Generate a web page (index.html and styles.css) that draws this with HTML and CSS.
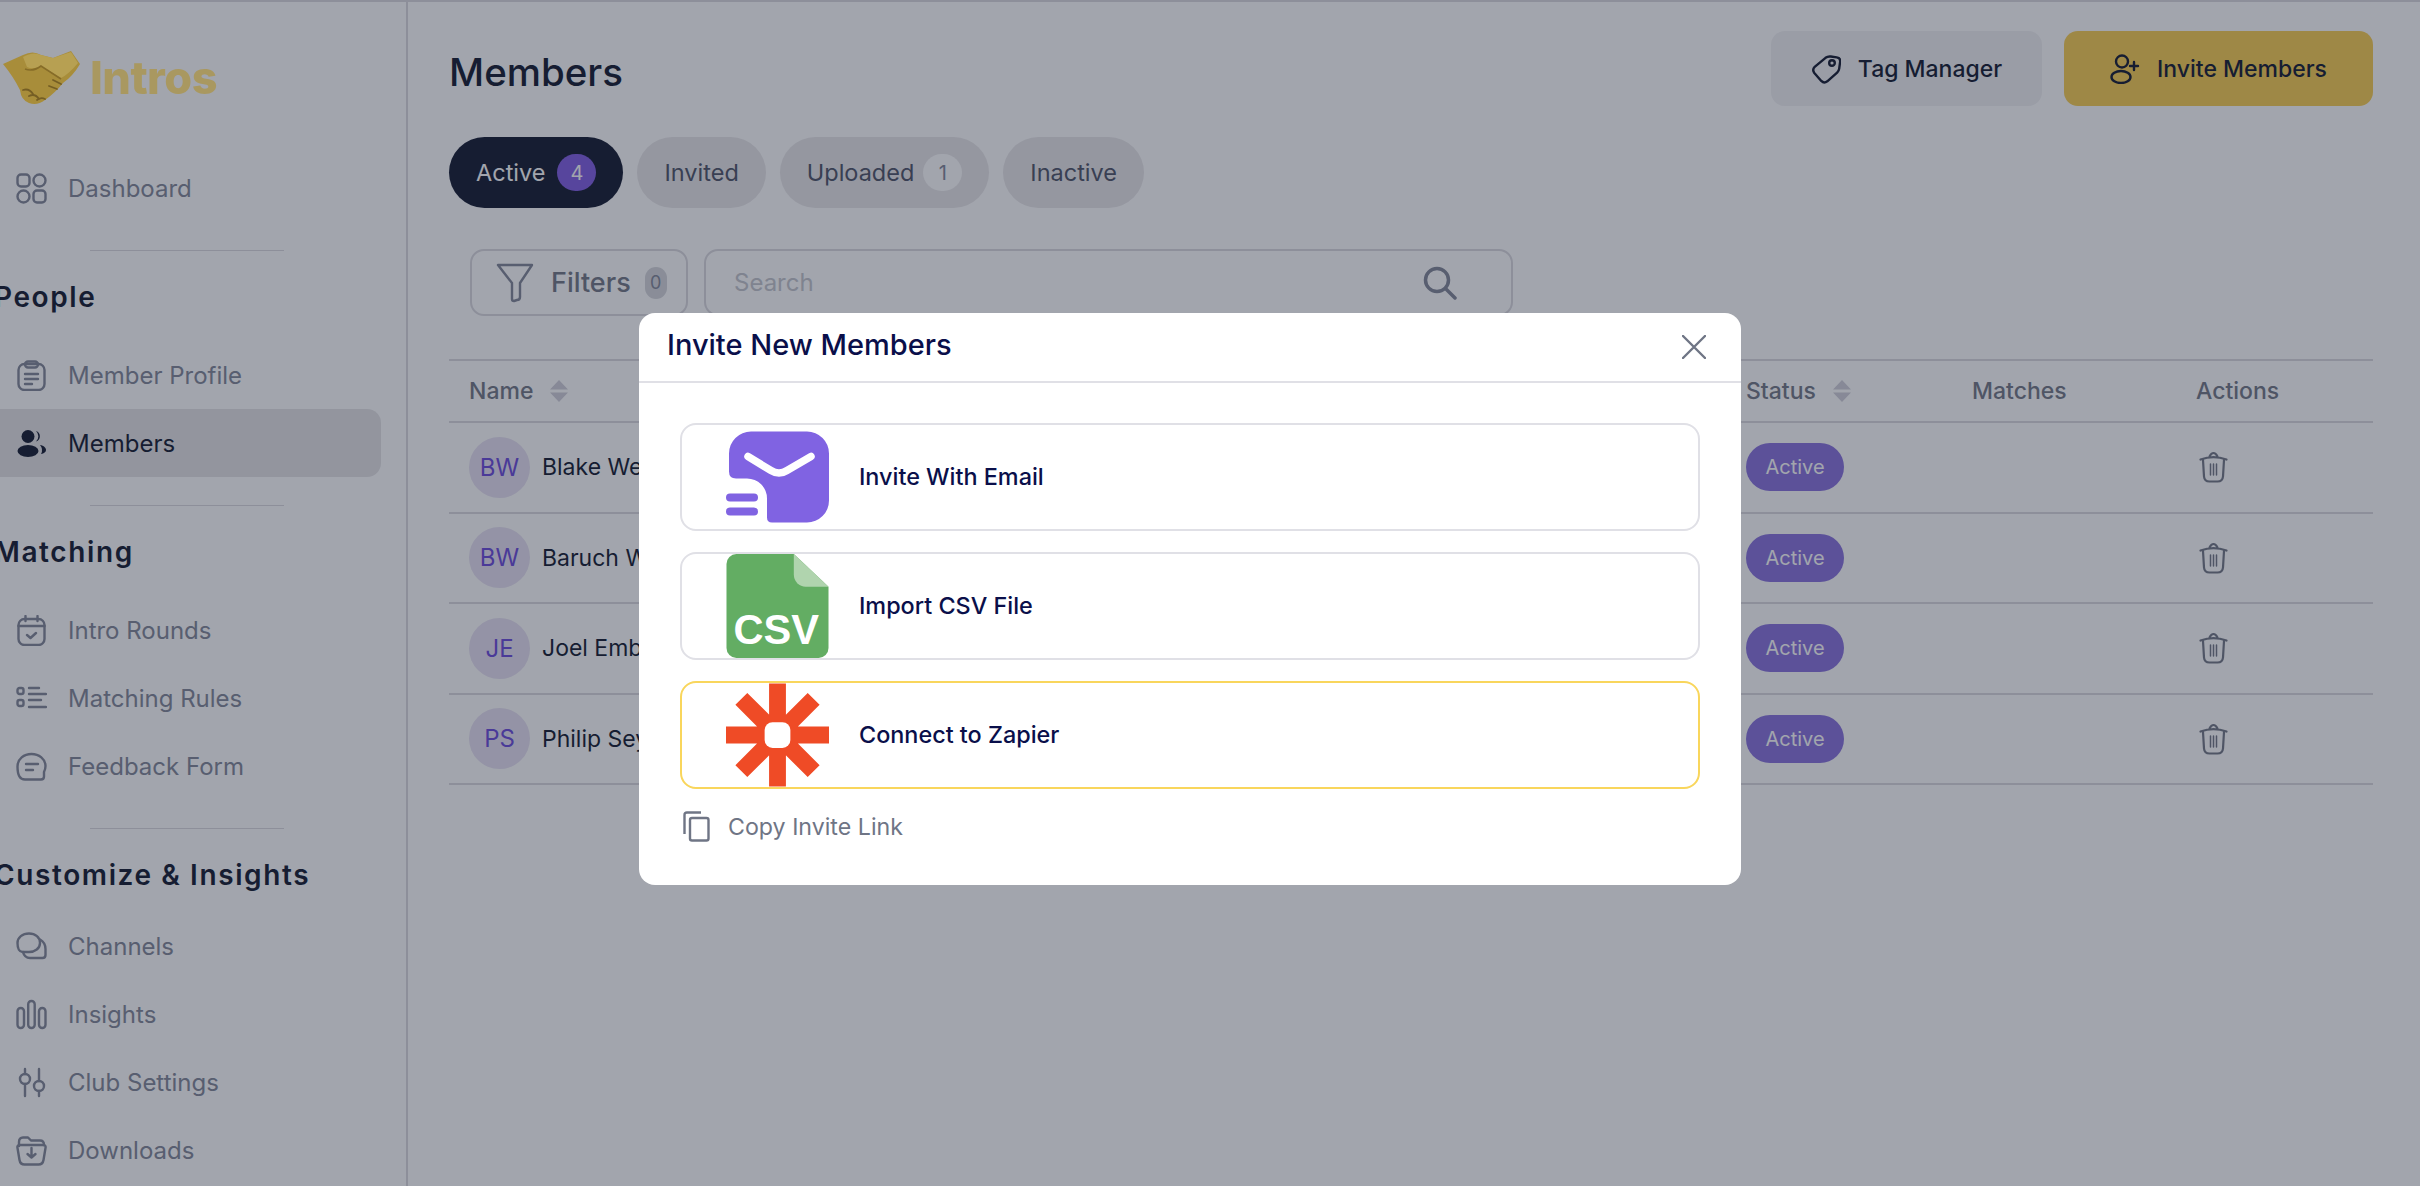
FILE: index.html
```html
<!DOCTYPE html>
<html lang="en">
<head>
<meta charset="UTF-8" />
<meta name="viewport" content="width=device-width, initial-scale=1" />
<title>Members - Intros</title>
<link rel="stylesheet" href="styles.css">
</head>
<body>

<div class="app">
  <aside class="sidebar">
    <div class="logo">
      <svg class="logo-mark" viewBox="0 0 77 55">
        <path d="M0 14 L20 5 Q30 0 38 5 L50 8 L68 1 L77 14 Q70 26 60 33 Q52 43 42 50 Q34 56 26 53 Q18 50 17 40 Q10 26 0 14Z" fill="#a88d3a"/>
        <path d="M20 7 Q30 1 38 5 L50 8 L68 2 L75 13 Q66 24 58 28 L38 16 Q30 20 24 17 Z" fill="#b7a052"/>
        <path d="M22 19 Q30 22 38 16 L58 29" fill="none" stroke="#866c28" stroke-width="1.6"/>
        <path d="M20 40 Q26 38 30 44 M26 46 Q32 43 36 49 M34 50 Q38 47 42 49 M50 30 L58 34 M46 36 L54 39" fill="none" stroke="#755e24" stroke-width="1.8" stroke-linecap="round"/>
      </svg>
      <span class="logo-text">Intros</span>
    </div>

    <a class="nav-item">
      <svg class="nav-icon" viewBox="0 0 31 31"><rect x="1.5" y="1.5" width="12" height="12" rx="3.5"/><circle cx="23.5" cy="7.5" r="6"/><circle cx="7.5" cy="23.5" r="6"/><rect x="17.5" y="17.5" width="12" height="12" rx="3.5"/></svg>
      Dashboard
    </a>
    <div class="nav-divider"></div>

    <div class="nav-title">People</div>
    <a class="nav-item">
      <svg class="nav-icon" viewBox="0 0 31 31"><rect x="2.5" y="4" width="26" height="26" rx="6"/><rect x="9" y="1.5" width="13" height="6" rx="3"/><path d="M9 14h13M9 19h13M9 24h7"/></svg>
      Member Profile
    </a>
    <a class="nav-item nav-item-active">
      <svg class="nav-icon nav-icon-solid" viewBox="0 0 31 31"><circle cx="12" cy="8.5" r="6.5"/><ellipse cx="12" cy="23" rx="10.5" ry="6"/><path d="M20 3a5.5 5.5 0 0 1 0 10.500a7 7 0 0 0 0-10.500zM24 17c4 .5 6 3 6 5s-2 3.500-5 4a8 8 0 0 0-1-9z"/></svg>
      Members
    </a>
    <div class="nav-divider"></div>

    <div class="nav-title">Matching</div>
    <a class="nav-item">
      <svg class="nav-icon" viewBox="0 0 31 31"><rect x="2.500" y="4" width="26" height="26" rx="6"/><path d="M9.500 1v5M21.500 1v5M2.500 11h26M11 20l3.500 3L20 18"/></svg>
      Intro Rounds
    </a>
    <a class="nav-item">
      <svg class="nav-icon" viewBox="0 0 31 31"><rect x="1.500" y="5" width="6" height="6" rx="2"/><rect x="1.500" y="17" width="6" height="6" rx="2"/><path d="M13 5h10M13 11h17M13 17h12M13 24h17"/></svg>
      Matching Rules
    </a>
    <a class="nav-item">
      <svg class="nav-icon" viewBox="0 0 31 31"><path d="M15.500 3C23 3 29.500 8 29.500 15c0 2-.5 4-1.500 6v4.500c0 2-1 3-3 3H9c-5 0-7.500-4-7.500-13C1.500 8 8 3 15.500 3z"/><path d="M10 13h12M10 19h7"/></svg>
      Feedback Form
    </a>
    <div class="nav-divider"></div>

    <div class="nav-title nav-title-tight">Customize &amp; Insights</div>
    <a class="nav-item">
      <svg class="nav-icon" viewBox="0 0 31 31"><path d="M13 2.500c6.500 0 11 4 11 9.500s-5 9-11 9H6.500C3.500 21 1.500 18 1.500 12 1.500 6.500 6.500 2.500 13 2.500z"/><path d="M24 8.500c3.500 2 5.500 5.500 5.500 9.500v6c0 2-1 3-3 3H14c-3.500 0-6-2-7-6"/></svg>
      Channels
    </a>
    <a class="nav-item">
      <svg class="nav-icon" viewBox="0 0 31 31"><rect x="1.500" y="9" width="6.500" height="20" rx="3.200"/><rect x="12.200" y="2" width="6.500" height="27" rx="3.200"/><rect x="23" y="9" width="6.500" height="20" rx="3.200"/></svg>
      Insights
    </a>
    <a class="nav-item">
      <svg class="nav-icon" viewBox="0 0 31 31"><circle cx="9" cy="12" r="5"/><circle cx="23" cy="19" r="5"/><path d="M9 2v5M9 17v12M23 2v12M23 24v5"/></svg>
      Club Settings
    </a>
    <a class="nav-item">
      <svg class="nav-icon" viewBox="0 0 31 31"><path d="M3 11V7c0-3 1.500-4.500 4-4.500h5l3 3h9c2.500 0 4 1.500 4 4.500"/><path d="M1.500 13c-.5-2 .5-3 2.500-3h23c2 0 3 1 2.500 3l-2 12c-.5 3-2 4.500-5 4.500H8.500c-3 0-4.500-1.500-5-4.500z"/><path d="M15.500 13v9M11.500 19l4 3.500 4-3.500"/></svg>
      Downloads
    </a>
  </aside>

  <main class="content">
    <div class="page-head">
      <h1 class="page-title">Members</h1>
      <div class="head-actions">
        <button class="btn btn-light">
          <svg class="btn-icon" viewBox="0 0 30 30"><path d="M18 2h6c3 0 4 1.500 4 4v7c0 1.500-.5 2.500-1.500 4L18 27c-2 2-4 2-6 .5l-8-7c-2-2-2-4-.5-6L13 4c1.500-1.500 3-2 5-2z" transform="rotate(8 15 15)"/><circle cx="21" cy="9" r="2.800"/></svg>
          Tag Manager
        </button>
        <button class="btn btn-primary">
          <svg class="btn-icon" viewBox="0 0 30 30"><circle cx="12" cy="7.500" r="6"/><ellipse cx="11" cy="23" rx="9.500" ry="6"/><path d="M24 8v8M20 12h8"/></svg>
          Invite Members
        </button>
      </div>
    </div>

    <div class="tabs">
      <div class="tab tab-active">Active <span class="tab-count tab-count-active">4</span></div>
      <div class="tab">Invited</div>
      <div class="tab">Uploaded <span class="tab-count">1</span></div>
      <div class="tab">Inactive</div>
    </div>

    <div class="toolbar">
      <div class="filter-box">
        <svg class="filter-icon" viewBox="0 0 38 40"><path d="M2 2h34L24 20v14c0 2-1 3-3 3l-3 1c-1 0-2-1-2-2V20z"/></svg>
        <span class="filter-label">Filters</span>
        <span class="filter-count">0</span>
      </div>
      <div class="search-box">
        <span class="search-text">Search</span>
        <svg class="search-icon" viewBox="0 0 34 34"><circle cx="14" cy="14" r="11.500"/><path d="M23 23l9 9"/></svg>
      </div>
    </div>

    <div class="table">
      <div class="table-row table-head">
        <div class="cell-head">Name <svg class="sort-icon" viewBox="0 0 18 22"><path d="M9 0l9 9.500H0zM0 12.500h18L9 22z"/></svg></div>
        <div class="cell-head">Status <svg class="sort-icon" viewBox="0 0 18 22"><path d="M9 0l9 9.500H0zM0 12.500h18L9 22z"/></svg></div>
        <div class="cell-head">Matches</div>
        <div class="cell-head">Actions</div>
      </div>

      <div class="table-row">
        <div class="member"><span class="avatar">BW</span>Blake Weber</div>
        <div><span class="status-pill">Active</span></div>
        <div></div>
        <div><svg class="trash-icon" viewBox="0 0 29 32"><path d="M1.500 8.500c8-3 18-3 26 0M10.500 5.500c1-2 2-3.500 4-3.500s3 1.500 4 3.500M4 9l1 16.500c.3 3.500 2.500 5 5.500 5h8c3 0 5.200-1.500 5.500-5L25 9"/><path class="trash-lines" d="M11.500 13v11M14.500 13v11M17.500 13v11"/></svg></div>
      </div>
      <div class="table-row">
        <div class="member"><span class="avatar">BW</span>Baruch Weiss</div>
        <div><span class="status-pill">Active</span></div>
        <div></div>
        <div><svg class="trash-icon" viewBox="0 0 29 32"><path d="M1.500 8.500c8-3 18-3 26 0M10.500 5.500c1-2 2-3.500 4-3.500s3 1.500 4 3.500M4 9l1 16.500c.3 3.500 2.500 5 5.500 5h8c3 0 5.200-1.500 5.500-5L25 9"/><path class="trash-lines" d="M11.500 13v11M14.500 13v11M17.500 13v11"/></svg></div>
      </div>
      <div class="table-row">
        <div class="member"><span class="avatar">JE</span>Joel Embry</div>
        <div><span class="status-pill">Active</span></div>
        <div></div>
        <div><svg class="trash-icon" viewBox="0 0 29 32"><path d="M1.500 8.500c8-3 18-3 26 0M10.500 5.500c1-2 2-3.500 4-3.500s3 1.500 4 3.500M4 9l1 16.500c.3 3.500 2.500 5 5.500 5h8c3 0 5.200-1.500 5.500-5L25 9"/><path class="trash-lines" d="M11.500 13v11M14.500 13v11M17.500 13v11"/></svg></div>
      </div>
      <div class="table-row">
        <div class="member"><span class="avatar">PS</span>Philip Seymour</div>
        <div><span class="status-pill">Active</span></div>
        <div></div>
        <div><svg class="trash-icon" viewBox="0 0 29 32"><path d="M1.500 8.500c8-3 18-3 26 0M10.500 5.500c1-2 2-3.500 4-3.500s3 1.500 4 3.500M4 9l1 16.500c.3 3.500 2.500 5 5.500 5h8c3 0 5.200-1.500 5.500-5L25 9"/><path class="trash-lines" d="M11.500 13v11M14.500 13v11M17.500 13v11"/></svg></div>
      </div>
    </div>
  </main>
</div>

<div class="overlay"></div>

<div class="modal">
  <div class="modal-head">
    <span class="modal-title">Invite New Members</span>
    <svg class="modal-close" viewBox="0 0 24 24"><path d="M1 1l22 22M23 1L1 23"/></svg>
  </div>
  <div class="modal-body">
    <div class="option">
      <svg class="option-icon" viewBox="0 0 103 91">
        <path d="M3 22a22 22 0 0 1 22-22h56a22 22 0 0 1 22 22v47a22 22 0 0 1-22 22H46q-5 0-5-5V67a20 20 0 0 0-20-20H10q-7 0-7-7z" fill="#8063e2"/>
        <path d="M22 25l23 14q8 5 16 0l24-14" fill="none" stroke="#fff" stroke-width="7.500" stroke-linecap="round"/>
        <rect x="0" y="62" width="32" height="8" rx="4" fill="#8063e2"/>
        <rect x="0" y="76" width="32" height="8" rx="4" fill="#8063e2"/>
      </svg>
      <span class="option-label">Invite With Email</span>
    </div>
    <div class="option">
      <svg class="option-icon" viewBox="0 0 103 105">
        <path d="M10 0h58l35 33v62a10 10 0 0 1-10 10H10a10 10 0 0 1-10-10V10A10 10 0 0 1 10 0z" fill="#63ad63"/>
        <path d="M68 0l35 33H80a12 12 0 0 1-12-12z" fill="#b0d4ae"/>
        <text class="csv-text" x="7" y="91">CSV</text>
      </svg>
      <span class="option-label">Import CSV File</span>
    </div>
    <div class="option option-zapier">
      <svg class="option-icon" viewBox="0 0 104 104">
        <path d="M52 0v104M0 52h104M15.500 15.500l73 73M88.500 15.500l-73 73" stroke="#ef4b26" stroke-width="17"/>
        <rect x="39" y="39" width="26" height="26" rx="8" fill="#fff"/>
      </svg>
      <span class="option-label">Connect to Zapier</span>
    </div>
    <div class="copy-link">
      <svg class="copy-icon" viewBox="0 0 27 31"><path d="M18 1.500H4Q1.500 1.500 1.500 4v19"/><rect x="7" y="7" width="18.500" height="22.500" rx="2"/></svg>
      Copy Invite Link
    </div>
  </div>
</div>

</body>
</html>
```

FILE: styles.css
```css
* {
  box-sizing: border-box;
}
html, body {
  margin: 0;
  height: 100%;
  overflow: hidden;
}
body {
  font-family: "Inter", "Noto Sans", sans-serif;
  background: #fff;
  color: #161d33;
}

.app {
  display: flex;
  height: 1186px;
  border-top: 2px solid #dcdbe0;
}

/* sidebar */
.sidebar {
  width: 408px;
  flex-shrink: 0;
  border-right: 2px solid #dcdbe0;
}
.logo {
  height: 152px;
  display: flex;
  align-items: flex-start;
  padding: 48px 0 0 3px;
  position: relative;
  z-index: 20;
}
.logo-mark {
  width: 77px;
  height: 55px;
}
.logo-text {
  margin-left: 10px;
  font-size: 45px;
  line-height: 55px;
  font-weight: 800;
  color: #a99860;
  letter-spacing: -0.5px;
}
.nav-item {
  display: flex;
  align-items: center;
  gap: 21px;
  width: 395px;
  height: 68px;
  margin-left: -14px;
  padding-left: 30px;
  border-radius: 14px;
  font-size: 24px;
  color: #848999;
}
.nav-item-active {
  background: #e6e5e7;
  color: #161d33;
}
.nav-icon {
  width: 31px;
  height: 31px;
  flex-shrink: 0;
  fill: none;
  stroke: #848999;
  stroke-width: 2.4;
  stroke-linecap: round;
  stroke-linejoin: round;
}
.nav-icon-solid {
  fill: #161d33;
  stroke: none;
}
.nav-divider {
  width: 194px;
  height: 1px;
  margin: 28px 0 0 90px;
  background: #dcdbe0;
}
.nav-title {
  margin: 29px 0 27px -6px;
  height: 34px;
  line-height: 34px;
  font-size: 28px;
  font-weight: 600;
  letter-spacing: 1.6px;
  white-space: nowrap;
}
.nav-title-tight {
  margin-bottom: 20px;
}

/* main column */
.content {
  flex: 1;
  min-width: 0;
  padding: 29px 47px 0 41px;
}
.page-head {
  display: flex;
  justify-content: space-between;
  align-items: center;
}
.page-title {
  margin: 6px 0 0;
  font-size: 38.500px;
  font-weight: 500;
}
.head-actions {
  display: flex;
  gap: 22px;
}
.btn {
  display: flex;
  align-items: center;
  justify-content: center;
  gap: 17px;
  height: 75px;
  border: none;
  border-radius: 14px;
  font-family: inherit;
  font-size: 23px;
  font-weight: 500;
  color: #161d33;
}
.btn-light {
  width: 271px;
  background: #f2f2f4;
}
.btn-primary {
  width: 309px;
  background: #f9cf54;
}
.btn-icon {
  width: 30px;
  height: 30px;
  fill: none;
  stroke: #161d33;
  stroke-width: 2.4;
  stroke-linecap: round;
  stroke-linejoin: round;
}

.tabs {
  display: flex;
  gap: 14px;
  margin-top: 31px;
}
.tab {
  display: flex;
  align-items: center;
  gap: 9px;
  height: 71px;
  padding: 0 27px;
  border-radius: 36px;
  background: #eae8ea;
  font-size: 23.500px;
  color: #505669;
}
.tab-active {
  gap: 12px;
  background: #161d33;
  color: #fff;
}
.tab-count {
  width: 39px;
  height: 37px;
  border-radius: 19px;
  background: #fff;
  display: flex;
  align-items: center;
  justify-content: center;
  font-size: 20px;
  color: #848999;
}
.tab-count-active {
  background: #8360e4;
  color: #fff;
}

.toolbar {
  display: flex;
  gap: 16px;
  height: 67px;
  margin: 41px 0 0 21px;
}
.filter-box,
.search-box {
  display: flex;
  align-items: center;
  border: 2px solid #dcdbe0;
  border-radius: 14px;
}
.filter-box {
  width: 218px;
  padding-left: 24px;
}
.filter-icon {
  width: 38px;
  height: 40px;
  fill: none;
  stroke: #848999;
  stroke-width: 2.4;
  stroke-linejoin: round;
}
.filter-label {
  margin-left: 17px;
  font-size: 27px;
  font-weight: 500;
  color: #757a88;
}
.filter-count {
  width: 22px;
  height: 32px;
  margin-left: 14px;
  border-radius: 11px;
  background: #d7d8dd;
  display: flex;
  align-items: center;
  justify-content: center;
  font-size: 18px;
  color: #848999;
}
.search-box {
  width: 809px;
  padding: 0 54px 0 28px;
  justify-content: space-between;
}
.search-text {
  font-size: 24px;
  color: #c5c7ce;
}
.search-icon {
  width: 34px;
  height: 34px;
  fill: none;
  stroke: #848999;
  stroke-width: 3.500;
  stroke-linecap: round;
}

.table {
  margin-top: 43px;
  border-top: 2px solid #dcdbe0;
}
.table-row {
  display: grid;
  grid-template-columns: 1277px 226px 224px 1fr;
  align-items: center;
  height: 90.5px;
  padding-left: 20px;
  border-bottom: 2px solid #dcdbe0;
}
.table-head {
  height: 62px;
}
.cell-head {
  display: flex;
  align-items: center;
  gap: 17px;
  font-size: 23px;
  font-weight: 500;
  color: #757a88;
}
.sort-icon {
  width: 18px;
  height: 22px;
  fill: #d2d1da;
}
.member {
  display: flex;
  align-items: center;
  gap: 12px;
  font-size: 23px;
  color: #161d33;
}
.avatar {
  width: 61px;
  height: 61px;
  border-radius: 50%;
  background: #e8e2f3;
  display: flex;
  align-items: center;
  justify-content: center;
  font-size: 24px;
  color: #6d4ddd;
}
.status-pill {
  display: flex;
  align-items: center;
  justify-content: center;
  width: 98px;
  height: 48px;
  border-radius: 24px;
  background: #8a74de;
  font-size: 20px;
  color: #fff;
}
.trash-icon {
  display: block;
  width: 29px;
  height: 32px;
  margin-left: 3px;
  fill: none;
  stroke: #757a88;
  stroke-width: 2.2;
  stroke-linecap: round;
  stroke-linejoin: round;
}
.trash-lines {
  stroke-width: 1.5;
}

/* modal */
.overlay {
  position: fixed;
  inset: 0;
  z-index: 10;
  background: rgba(22, 29, 51, 0.4);
}
.modal {
  position: fixed;
  left: 639px;
  top: 313px;
  z-index: 30;
  width: 1102px;
  height: 572px;
  border-radius: 16px;
  background: #fff;
  color: #0a0f4a;
}
.modal-head {
  display: flex;
  align-items: center;
  justify-content: space-between;
  height: 70px;
  padding: 0 35px 0 28px;
  border-bottom: 2px solid #e0e0e6;
}
.modal-title {
  margin-bottom: 5px;
  font-size: 29px;
  font-weight: 500;
}
.modal-close {
  width: 24px;
  height: 24px;
  fill: none;
  stroke: #6f7585;
  stroke-width: 2.4;
  stroke-linecap: round;
}
.modal-body {
  display: flex;
  flex-direction: column;
  gap: 21px;
  padding: 40px 41px 0 41px;
}
.option {
  display: flex;
  align-items: center;
  gap: 30px;
  height: 108px;
  padding-left: 44px;
  border: 2px solid #e0e0e6;
  border-radius: 16px;
}
.option-zapier {
  border-color: #f9d65c;
}
.option-icon {
  width: 103px;
  height: 104px;
  flex-shrink: 0;
}
.option-label {
  margin-bottom: 1px;
  font-size: 23.400px;
  font-weight: 500;
}
.csv-text {
  font-family: "Liberation Sans", Arial, sans-serif;
  font-size: 42px;
  font-weight: 700;
  fill: #fff;
}
.copy-link {
  display: flex;
  align-items: center;
  gap: 18px;
  margin-top: 1px;
  padding-left: 3px;
  font-size: 23.200px;
  color: #6f7585;
}
.copy-icon {
  width: 27px;
  height: 31px;
  fill: none;
  stroke: #6f7585;
  stroke-width: 2.4;
}
```
